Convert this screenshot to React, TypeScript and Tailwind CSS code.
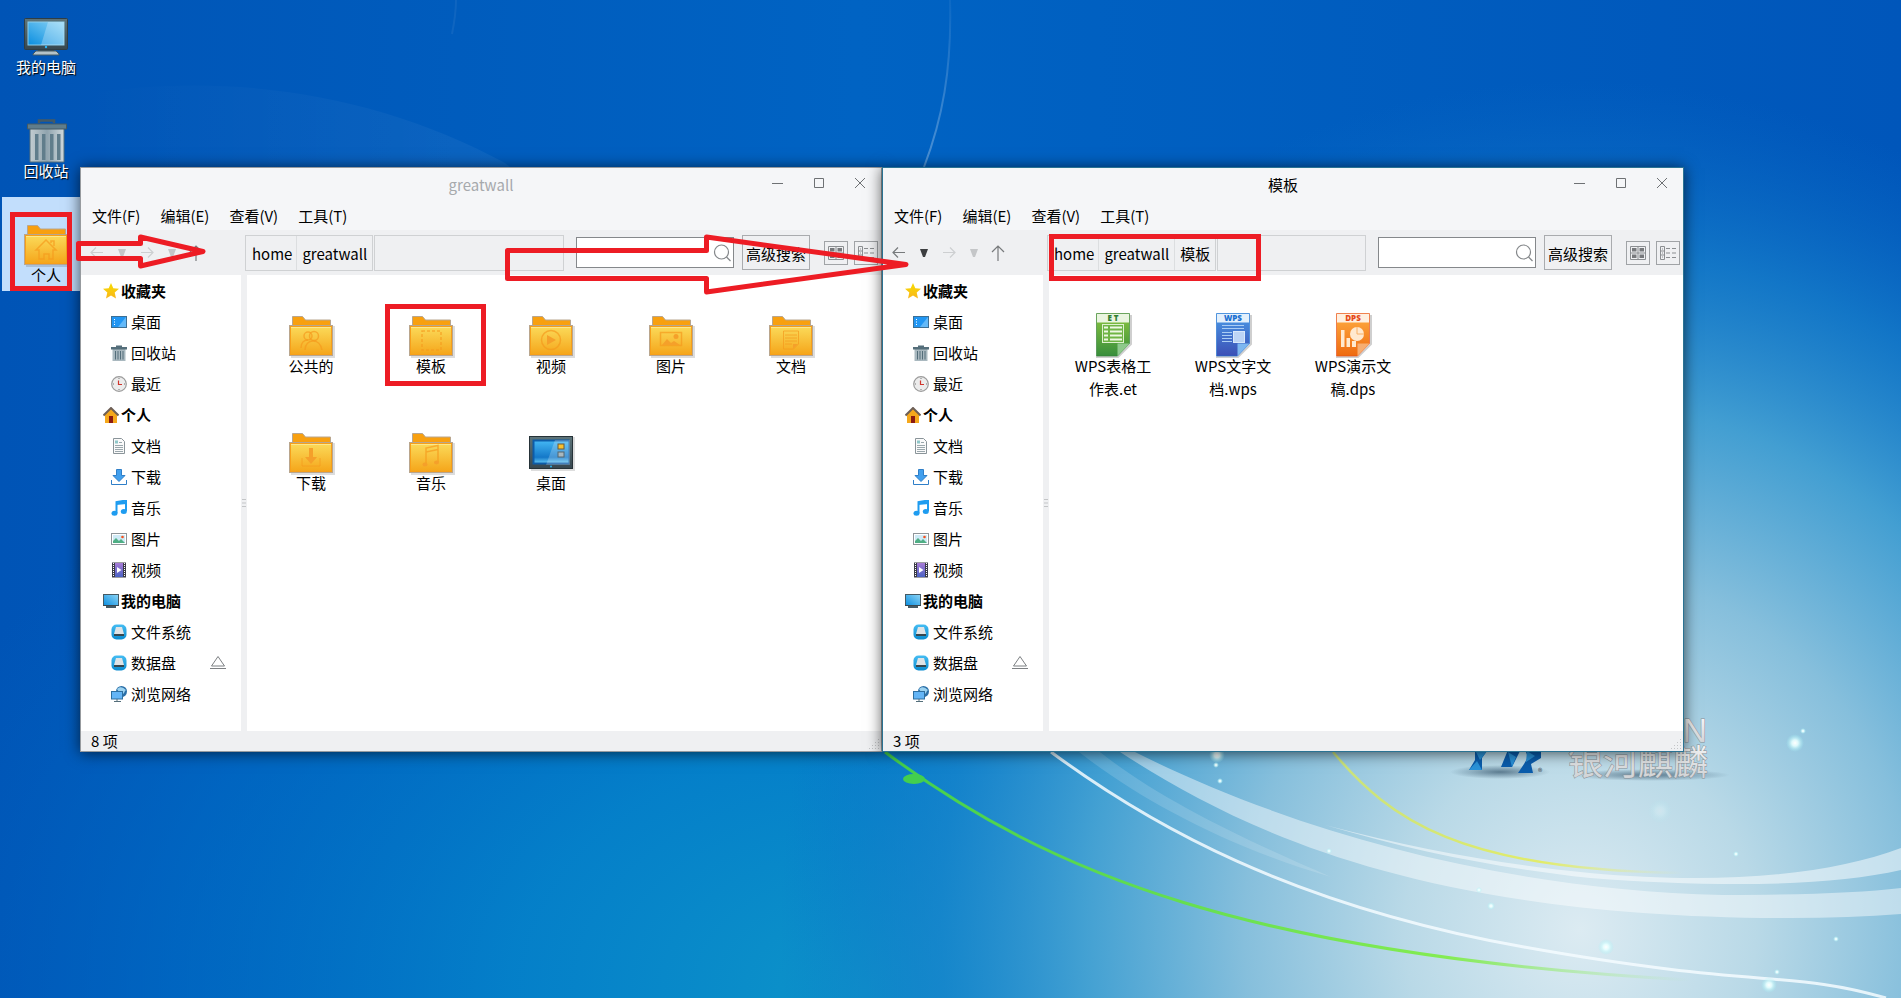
import type { ReactNode } from "react";

interface Place {
  label: string;
  icon: ReactNode;
  heading?: boolean;
  ejectable?: boolean;
}

interface FileEntry {
  name: string;
  icon: ReactNode;
}

interface FileWindowProps {
  title: string;
  active: boolean;
  path: string[];
  canGoBack: boolean;
  files: FileEntry[];
}

/* Shared gradients */
function Gradients() {
  return (
    <svg className="absolute h-0 w-0" aria-hidden="true">
      <defs>
        <linearGradient id="folder" x1="0" y1="0" x2="0" y2="1">
          <stop offset="0" stopColor="#fbdc5c" />
          <stop offset="1" stopColor="#f5a418" />
        </linearGradient>
        <linearGradient id="screen" x1="0" y1="1" x2="1" y2="0">
          <stop offset="0" stopColor="#0a8ee0" />
          <stop offset="1" stopColor="#8fd6f6" />
        </linearGradient>
        <linearGradient id="desk" x1="0" y1="0" x2="0" y2="1">
          <stop offset="0" stopColor="#41b4f2" />
          <stop offset="0.75" stopColor="#1478c8" />
          <stop offset="1" stopColor="#5cc0f0" />
        </linearGradient>
        <linearGradient id="frame" x1="0" y1="0" x2="0" y2="1">
          <stop offset="0" stopColor="#5d7479" />
          <stop offset="1" stopColor="#37474f" />
        </linearGradient>
        <linearGradient id="bin" x1="0" y1="0" x2="1" y2="0">
          <stop offset="0" stopColor="#c3cdd1" />
          <stop offset="0.5" stopColor="#90a4ae" />
          <stop offset="1" stopColor="#cfd8dc" />
        </linearGradient>
        <linearGradient id="star" x1="0" y1="0" x2="0" y2="1">
          <stop offset="0" stopColor="#f7dc00" />
          <stop offset="1" stopColor="#f9b61c" />
        </linearGradient>
        <linearGradient id="drive" x1="0" y1="0" x2="0" y2="1">
          <stop offset="0" stopColor="#45bdf3" />
          <stop offset="1" stopColor="#0a8bd0" />
        </linearGradient>
        <linearGradient id="film" x1="0" y1="0" x2="0" y2="1">
          <stop offset="0" stopColor="#a87bd6" />
          <stop offset="1" stopColor="#4a62c4" />
        </linearGradient>
        <linearGradient id="et" x1="0" y1="0" x2="0" y2="1">
          <stop offset="0" stopColor="#8cc63f" />
          <stop offset="1" stopColor="#388e3c" />
        </linearGradient>
        <linearGradient id="wps" x1="0" y1="0" x2="0" y2="1">
          <stop offset="0" stopColor="#4a9be8" />
          <stop offset="1" stopColor="#3c4fb5" />
        </linearGradient>
        <linearGradient id="dps" x1="0" y1="0" x2="0" y2="1">
          <stop offset="0" stopColor="#ffae42" />
          <stop offset="1" stopColor="#ee6a10" />
        </linearGradient>
        <linearGradient id="chrome" x1="0" y1="0" x2="0" y2="1">
          <stop offset="0" stopColor="#ffffff" />
          <stop offset="1" stopColor="#c9cccf" />
        </linearGradient>
      </defs>
    </svg>
  );
}

/* 48px icons */
function FolderIcon({ children }: { children: ReactNode }) {
  return (
    <svg viewBox="0 0 48 48" className="h-12 w-12 shrink-0" aria-hidden="true">
      <path d="M4 47h43V16" fill="none" stroke="#00000022" strokeWidth="2" />
      <path d="M5.500 16V6.500h10l3 3.500H43.500v6z" fill="#f8a010" stroke="#b9a68e" />
      <rect x="2.500" y="15.500" width="43" height="30" fill="url(#folder)" stroke="#b9a68e" />
      <rect x="3.500" y="16.500" width="41" height="28" fill="none" stroke="#f7a01a" />
      <path d="M4 17.500h40" stroke="#fde98a" />
      <g fill="none" stroke="#f59a1c" strokeOpacity="0.700" strokeWidth="1.500">
        {children}
      </g>
    </svg>
  );
}

function ComputerIcon() {
  return (
    <svg viewBox="0 0 48 48" className="h-12 w-12 shrink-0" aria-hidden="true">
      <path d="M16 38h16v4H16z" fill="#37474f" />
      <path d="M11 43l3-3h20l3 3v1H11z" fill="#b4c2c8" stroke="#455a64" />
      <rect x="2.500" y="7.500" width="43" height="31" rx="1" fill="url(#frame)" stroke="#2f3d44" />
      <rect x="6" y="11" width="36" height="23" fill="url(#screen)" stroke="#8ccdec" />
      <path d="M26 11h16v23H19z" fill="#fff" opacity="0.250" />
      <circle cx="24" cy="36" r="1.200" fill="#29b6f6" />
    </svg>
  );
}

function BinIcon() {
  return (
    <svg viewBox="0 0 48 48" className="h-12 w-12 shrink-0" aria-hidden="true">
      <path d="M17 8V5.500h15V8" fill="none" stroke="#455a64" strokeWidth="2.500" />
      <path d="M8 13h34v34H8z" fill="url(#bin)" stroke="#546e7a" />
      <path d="M5.500 9h39v5h-39z" fill="#607d8b" stroke="#455a64" />
      <path d="M13 19h3.500v26H13zM20 19h3.500v26H20zM28 19h3.500v26H28zM35 19h3.500v26H35z" fill="#607d8b" />
    </svg>
  );
}

function DesktopIcon() {
  return (
    <svg viewBox="0 0 48 48" className="h-12 w-12 shrink-0" aria-hidden="true">
      <path d="M4 43h43V10" fill="none" stroke="#00000022" strokeWidth="2" />
      <rect x="2.500" y="9.500" width="43" height="32" fill="url(#frame)" stroke="#263238" />
      <rect x="5.500" y="12.500" width="37" height="25" fill="#0d5ca8" />
      <rect x="7.500" y="14.500" width="34" height="21" fill="url(#desk)" />
      <path d="M28 13h15v25H19z" fill="#fff" opacity="0.220" />
      <rect x="31" y="17" width="6" height="5" fill="#fbc02d" stroke="#6b5b3a" />
      <rect x="31" y="25" width="6" height="5" fill="#a9b8bf" stroke="#54666e" />
      <circle cx="24" cy="39.500" r="1" fill="#29b6f6" />
    </svg>
  );
}

interface DocIconProps {
  badge: string;
  fill: string;
  headFill: string;
  badgeColor: string;
  foldFill: string;
  children: ReactNode;
}

function DocIcon({ badge, fill, headFill, badgeColor, foldFill, children }: DocIconProps) {
  return (
    <svg viewBox="0 0 48 48" className="h-12 w-12 shrink-0" aria-hidden="true">
      <path d="M7 47h22l13-13V5" fill="none" stroke="#00000030" strokeWidth="2" />
      <path d="M7.500 3.500h33v30l-12 12.500h-21z" fill={fill} stroke={badgeColor} strokeOpacity="0.600" />
      <path d="M8 4h32v8.500H8z" fill={headFill} />
      {children}
      <path d="M40.500 33.500h-12V46z" fill={foldFill} />
      <text x="24" y="11" textAnchor="middle" fontSize="8" fontWeight="800" fill={badgeColor} fontFamily="Open Sans, sans-serif">
        {badge}
      </text>
    </svg>
  );
}

const homeFolder = (
  <FolderIcon>
    <path d="M14 31l10-10 10 10h-3v9h-4v-5h-5v5h-5v-9zM29 24v-2h3v5" />
  </FolderIcon>
);

const homeFiles: FileEntry[] = [
  {
    name: "公共的",
    icon: (
      <FolderIcon>
        <circle cx="21" cy="26" r="4" />
        <circle cx="27" cy="26" r="4.500" />
        <path d="M14 38c0-5 3-8 7-8M18 40c0-6 4-9 8-9s8 3 9 9" />
      </FolderIcon>
    ),
  },
  {
    name: "模板",
    icon: (
      <FolderIcon>
        <rect x="15" y="21" width="19" height="19" strokeDasharray="3 2" />
      </FolderIcon>
    ),
  },
  {
    name: "视频",
    icon: (
      <FolderIcon>
        <circle cx="24" cy="30" r="9.500" />
        <path d="M20 25v10l9-5z" fill="#f5a02a" stroke="none" />
      </FolderIcon>
    ),
  },
  {
    name: "图片",
    icon: (
      <FolderIcon>
        <rect x="13.500" y="22.500" width="21" height="13" />
        <path d="M15 35l5-6 4 4 3-2 6 4z" fill="#f5a02a" stroke="none" />
        <circle cx="29" cy="26.500" r="2.500" fill="#f5a02a" stroke="none" />
      </FolderIcon>
    ),
  },
  {
    name: "文档",
    icon: (
      <FolderIcon>
        <path d="M31.500 34v-13h-15v18h10zM18 25h12M18 28h12M18 31h12M18 34h7" strokeWidth="1" />
        <path d="M31 34h-5v5z" fill="#f5a02a" stroke="none" />
      </FolderIcon>
    ),
  },
  {
    name: "下载",
    icon: (
      <FolderIcon>
        <path d="M15 31v8h18v-8" strokeWidth="1" />
        <path d="M22 21h4v9h4l-6 7-6-7h4z" fill="#f5a02a" stroke="none" />
      </FolderIcon>
    ),
  },
  {
    name: "音乐",
    icon: (
      <FolderIcon>
        <path d="M19 37V21l12-2.500V35M19 25l12-2.500" />
        <ellipse cx="18" cy="37.500" rx="2.500" ry="2" fill="#f5a02a" stroke="none" />
        <ellipse cx="29.500" cy="35.500" rx="2.500" ry="2" fill="#f5a02a" stroke="none" />
      </FolderIcon>
    ),
  },
  { name: "桌面", icon: <DesktopIcon /> },
];

const templateFiles: FileEntry[] = [
  {
    name: "WPS表格工作表.et",
    icon: (
      <DocIcon badge="E T" fill="url(#et)" headFill="#eaf5e0" badgeColor="#2e7d32" foldFill="#8fc98c">
        <rect x="13.500" y="14.500" width="21" height="18" fill="#6fb545" stroke="#dff0d0" />
        <path d="M15 17.500h4M15 21.500h4M15 25.500h4M15 29.500h4M21 17.500h12M21 21.500h12M21 25.500h12M21 29.500h12" stroke="#eef8e4" strokeWidth="2" />
      </DocIcon>
    ),
  },
  {
    name: "WPS文字文档.wps",
    icon: (
      <DocIcon badge="WPS" fill="url(#wps)" headFill="#e3f0fc" badgeColor="#1a6fd0" foldFill="#7db7f0">
        <path d="M13 15.500h22M13 18.500h22M13 22.500h10M13 25.500h10M13 28.500h10M13 31.500h10" stroke="#a9ccf4" />
        <rect x="24.500" y="21.500" width="11" height="11" fill="#bcd4f5" stroke="#d8e8fb" />
      </DocIcon>
    ),
  },
  {
    name: "WPS演示文稿.dps",
    icon: (
      <DocIcon badge="DPS" fill="url(#dps)" headFill="#fff0e0" badgeColor="#e64a19" foldFill="#f7ae72">
        <path d="M12 20h3.500v17H12zM17.500 28H21v9h-3.500zM23 31h4v6h-4z" fill="#ffe9cf" />
        <circle cx="28" cy="24" r="7" fill="#ffe9cf" />
        <path d="M28 17v7h7" fill="none" stroke="#f9b066" />
      </DocIcon>
    ),
  },
];

/* 16px sidebar icons */
function SmallIcon({ children }: { children: ReactNode }) {
  return (
    <svg viewBox="0 0 16 16" className="h-4 w-4 shrink-0" aria-hidden="true">
      {children}
    </svg>
  );
}

const driveIcon = (
  <SmallIcon>
    <rect x="0.500" y="0.500" width="15" height="15" rx="5" fill="url(#drive)" />
    <path d="M5 3h6l2 7H3z" fill="#dfe3e6" />
    <path d="M3 10h10v2H3z" fill="#37474f" />
  </SmallIcon>
);

const places: Place[] = [
  {
    label: "收藏夹",
    heading: true,
    icon: (
      <SmallIcon>
        <path d="M8 0l2.300 5.300 5.700.5-4.300 3.800 1.300 5.900-5-3.100-5 3.100 1.300-5.900L0 5.800l5.700-.5z" fill="url(#star)" />
      </SmallIcon>
    ),
  },
  {
    label: "桌面",
    icon: (
      <SmallIcon>
        <rect x="0.500" y="2.500" width="15" height="11" fill="#2196f3" stroke="#3d6f94" />
        <path d="M7 13L15 3v10z" fill="#64b9f8" />
        <path d="M3.500 5v6" stroke="#fff" strokeDasharray="1 1.500" />
      </SmallIcon>
    ),
  },
  {
    label: "回收站",
    icon: (
      <SmallIcon>
        <path d="M1.500 4h13v12h-13z" fill="#a9b8bf" />
        <path d="M5 0.500h6V2h5v2.500H0V2h5z" fill="#546e7a" />
        <path d="M4.500 6v8.500M7 6v8.500M9.500 6v8.500M12 6v8.500" stroke="#546e7a" />
      </SmallIcon>
    ),
  },
  {
    label: "最近",
    icon: (
      <SmallIcon>
        <circle cx="8" cy="8" r="7.300" fill="#ececec" stroke="#9b9b9b" strokeWidth="1.200" />
        <path d="M8 2v1M8 13v1M2 8h1M13 8h1" stroke="#777" />
        <path d="M7.500 4.500v4H11" fill="none" stroke="#d0342c" strokeWidth="1.200" />
      </SmallIcon>
    ),
  },
  {
    label: "个人",
    heading: true,
    icon: (
      <SmallIcon>
        <path d="M2 7l6-6 6 6v9H2z" fill="#f5a81c" />
        <path d="M6 9h4v7H6z" fill="#8b1a10" />
        <path d="M0.500 8.500L8 1l7.500 7.500" fill="none" stroke="#6d5f57" strokeWidth="2" />
      </SmallIcon>
    ),
  },
  {
    label: "文档",
    icon: (
      <SmallIcon>
        <path d="M2.500 0.500h8l3 3v12h-11z" fill="#fafafa" stroke="#8a9499" />
        <path d="M4 2.500h3v3H4z" fill="#8fc7c9" />
        <path d="M8 4.500h3M4 7.500h8M4 9.500h8M4 11.500h8M4 13.500h8" stroke="#9aa7ac" />
      </SmallIcon>
    ),
  },
  {
    label: "下载",
    icon: (
      <SmallIcon>
        <path d="M5.500 0.500h5v6H14l-6 6-6-6h3.500z" fill="#42a0ee" stroke="#2f7fc8" />
        <path d="M0.500 11v4.500h15V11" fill="none" stroke="#2f7fc8" />
      </SmallIcon>
    ),
  },
  {
    label: "音乐",
    icon: (
      <SmallIcon>
        <path d="M5.500 13V2L15 0.500V11" fill="none" stroke="#1e9cf0" strokeWidth="2" />
        <path d="M5 2.500L15.500 1v3L5 5z" fill="#1e9cf0" />
        <ellipse cx="3.500" cy="13.300" rx="3" ry="2.500" fill="#1e9cf0" />
        <ellipse cx="12.800" cy="11.500" rx="3" ry="2.500" fill="#1e9cf0" />
      </SmallIcon>
    ),
  },
  {
    label: "图片",
    icon: (
      <SmallIcon>
        <rect x="0.500" y="2.500" width="15" height="11" fill="#fff" stroke="#8f9599" />
        <path d="M2 4h12v8H2z" fill="#cfeaf6" />
        <path d="M2 12V10l3-3 3 3 2-2 4 4z" fill="#4fae85" />
        <circle cx="11.500" cy="6" r="1.300" fill="#f4511e" />
      </SmallIcon>
    ),
  },
  {
    label: "视频",
    icon: (
      <SmallIcon>
        <path d="M1 0.500h14v15H1z" fill="#3b3b46" />
        <path d="M2.500 1v14M13.500 1v14" stroke="#fff" strokeDasharray="1 1" />
        <path d="M4 1h8v14H4z" fill="url(#film)" />
        <path d="M6 5v6l4.500-3z" fill="#fff" />
      </SmallIcon>
    ),
  },
  {
    label: "我的电脑",
    heading: true,
    icon: (
      <SmallIcon>
        <path d="M3 13h10v2H3z" fill="#455a64" />
        <rect x="0.500" y="1.500" width="15" height="11" fill="url(#screen)" stroke="#455a64" />
        <path d="M0 12.500h16" stroke="#37474f" />
      </SmallIcon>
    ),
  },
  { label: "文件系统", icon: driveIcon },
  { label: "数据盘", icon: driveIcon, ejectable: true },
  {
    label: "浏览网络",
    icon: (
      <SmallIcon>
        <circle cx="10.500" cy="5.500" r="5.500" fill="#2a6fa8" />
        <path d="M6 3c3-3 6-2 9 1-2 1-1 3-3 4s-4-2-6-5z" fill="#9cd2f0" />
        <rect x="0.500" y="5.500" width="11" height="7.500" fill="#64b5f6" stroke="#2f6f9f" />
        <path d="M6 13v2.500M3 15.500h7" stroke="#546e7a" />
      </SmallIcon>
    ),
  },
];

const menus = ["文件(F)", "编辑(E)", "查看(V)", "工具(T)"];

function TitleBar({ title, active }: { title: string; active: boolean }) {
  return (
    <header className="grid h-8 grid-cols-[1fr_auto_1fr] items-center bg-[#f5f6f8]">
      <h2 className={`col-start-2 ${active ? "text-black" : "text-[#a6a9ac]"}`}>{title}</h2>
      <div className="flex items-center justify-end gap-[29px] pr-[15px] pb-[3px]">
        <button aria-label="最小化">
          <svg className="h-3 w-3" viewBox="0 0 12 12" stroke="#6e7174">
            <path d="M0 6.500h11" />
          </svg>
        </button>
        <button aria-label="最大化">
          <svg className="h-3 w-3" viewBox="0 0 12 12" fill="none" stroke="#6e7174">
            <path d="M1.500 1.500h9v9h-9z" />
          </svg>
        </button>
        <button aria-label="关闭">
          <svg className="h-3 w-3" viewBox="0 0 12 12" stroke="#6e7174">
            <path d="M1 1l10 10M11 1L1 11" />
          </svg>
        </button>
      </div>
    </header>
  );
}

function NavButtons({ canGoBack }: { canGoBack: boolean }) {
  return (
    <div className="flex w-[164px] shrink-0 items-center gap-[11px] pl-2">
      <button aria-label="后退" disabled={!canGoBack} className={canGoBack ? "text-[#777a7c]" : "text-[#cdcfd1]"}>
        <svg className="h-4 w-4" viewBox="0 0 16 16" fill="none" stroke="currentColor" strokeWidth="1.200">
          <path d="M14 7.500H2M7 2.500l-5 5 5 5" />
        </svg>
      </button>
      <button aria-label="后退历史" disabled={!canGoBack} className={canGoBack ? "text-[#3c3e40]" : "text-[#c4c6c8]"}>
        <svg className="h-4 w-3" viewBox="0 0 12 16" fill="currentColor">
          <path d="M2 4h8l-3 8H5z" />
        </svg>
      </button>
      <button aria-label="前进" disabled className="text-[#cdcfd1]">
        <svg className="h-4 w-4" viewBox="0 0 16 16" fill="none" stroke="currentColor" strokeWidth="1.200">
          <path d="M2 7.500h12M9 2.500l5 5-5 5" />
        </svg>
      </button>
      <button aria-label="前进历史" disabled className="text-[#c4c6c8]">
        <svg className="h-4 w-3" viewBox="0 0 12 16" fill="currentColor">
          <path d="M2 4h8l-3 8H5z" />
        </svg>
      </button>
      <button aria-label="上一级" className="text-[#777a7c]">
        <svg className="h-4 w-3.5" viewBox="0 0 14 16" fill="none" stroke="currentColor" strokeWidth="1.200">
          <path d="M7 16V1M1 7l6-6 6 6" />
        </svg>
      </button>
    </div>
  );
}

function Toolbar({ path, canGoBack }: { path: string[]; canGoBack: boolean }) {
  return (
    <div className="flex h-[45px] items-center bg-[#eff0f2]">
      <NavButtons canGoBack={canGoBack} />
      {/* Path bar */}
      <div className="flex h-9 min-w-0 flex-1 gap-px">
        <nav className="flex items-center border border-[#cfd1d3]">
          {path.map((part, i) => (
            <a
              key={part}
              href="#"
              className={`flex h-full items-center pt-0.5 ${i ? "border-l border-[#dcdee0] px-[5px]" : "pr-1 pl-1.5"}`}
            >
              {part}
            </a>
          ))}
        </nav>
        <div className="flex-1 border border-[#cfd1d3]"></div>
      </div>
      <label className="ml-3 flex h-[31px] w-[158px] items-center border border-[#85888b] bg-white pr-0.5">
        <input type="text" aria-label="搜索" className="min-w-0 flex-1 bg-transparent px-1 outline-none" />
        <svg className="h-[18px] w-[18px]" viewBox="0 0 18 18" fill="none" stroke="#85888b" strokeWidth="1.200">
          <circle cx="8.500" cy="8" r="7" />
          <path d="M13.500 13l4 4" />
        </svg>
      </label>
      <button className="ml-2 h-[35px] w-[68px] border border-[#a9abae] pt-0.5 whitespace-nowrap">高级搜索</button>
      <button aria-label="图标视图" className="ml-3.5 grid h-6 w-6 place-items-center border border-[#a0a3a6]">
        <svg className="h-4 w-4" viewBox="0 0 16 16" fill="none" stroke="#8b8e91">
          <path d="M0.500 1.500h15v13H0.500zM8 2v12M1 8h14" />
          <path d="M2 3h4.500v3.500H2zM9.500 3H14v3.500H9.500zM2 9.500h4.500V13H2zM9.500 9.500H14V13H9.500z" fill="#77797c" stroke="none" />
        </svg>
      </button>
      <button aria-label="列表视图" className="mr-[3px] ml-1.5 grid h-6 w-6 place-items-center border border-[#a0a3a6]">
        <svg className="h-4 w-4" viewBox="0 0 16 16" fill="none" stroke="#8b8e91">
          <path d="M0.500 1.500h4v13h-4zM1 6h3M1 10h3M2 4h1M2 8h1M2 12h1" />
          <path d="M6 3.500h4M12 3.500h4M6 8h4M12 8h4M6 12.500h4M12 12.500h4" />
        </svg>
      </button>
    </div>
  );
}

function Sidebar() {
  return (
    <ul className="w-40 shrink-0 bg-white">
      {places.map((place, i) => (
        <li key={i} className="flex h-[31px] items-center">
          <a
            href="#"
            className={`flex flex-1 items-center ${place.heading ? "gap-0.5 pl-[22px] font-bold" : "gap-1 pl-[30px]"}`}
          >
            {place.icon}
            {place.label}
          </a>
          {place.ejectable && (
            <button aria-label="弹出" className="mr-[15px]">
              <svg className="h-4 w-4" viewBox="0 0 16 16" fill="none" stroke="#7d8083">
                <path d="M8 1.500l6.500 9.500h-13zM0 13.500h16" />
              </svg>
            </button>
          )}
        </li>
      ))}
    </ul>
  );
}

function FileWindow({ title, active, path, canGoBack, files }: FileWindowProps) {
  return (
    <section
      className={`flex w-[802px] shrink-0 flex-col border bg-[#eff0f2] text-black shadow-[0_1px_14px_rgba(0,0,0,0.65)] ${
        active ? "border-[#2a7393]" : "border-[#979b9f]"
      }`}
    >
      <TitleBar title={title} active={active} />
      <nav className="flex h-[30px] items-center gap-5 bg-[#f5f6f8] pl-[11px]">
        {menus.map((menu) => (
          <button key={menu}>{menu}</button>
        ))}
      </nav>
      <Toolbar path={path} canGoBack={canGoBack} />
      <div className="flex min-h-[456px]">
        <Sidebar />
        {/* Splitter */}
        <div className="grid w-1.5 place-items-center">
          <svg className="h-2 w-1" viewBox="0 0 4 8" stroke="#c3c5c7">
            <path d="M0 0.500h4M0 4h4M0 7.500h4" />
          </svg>
        </div>
        <ul className="flex flex-1 flex-wrap content-start gap-y-[46px] bg-white pt-[35px] pl-1">
          {files.map((file) => (
            <li key={file.name} className="flex h-[71px] w-[120px] flex-col items-center">
              {file.icon}
              <span className="-mt-1 w-20 text-center break-all">{file.name}</span>
            </li>
          ))}
        </ul>
      </div>
      <footer className="flex h-5 items-center justify-between pl-2.5 leading-5">
        <span>{files.length} 项</span>
        <svg className="h-3 w-3 self-end" viewBox="0 0 12 12" fill="#c3c5c7">
          <path d="M9 0h1v1H9zM9 3h1v1H9zM6 3h1v1H6zM9 6h1v1H9zM6 6h1v1H6zM3 6h1v1H3zM9 9h1v1H9zM6 9h1v1H6zM3 9h1v1H3zM0 9h1v1H0z" />
        </svg>
      </footer>
    </section>
  );
}

function Wallpaper() {
  const sparks = [
    [1795, 743, 9],
    [1803, 731, 3],
    [1606, 947, 8],
    [1769, 985, 8],
    [1777, 972, 3],
    [1217, 755, 8],
    [1216, 765, 3],
    [1220, 781, 3],
    [1329, 851, 3],
    [1479, 890, 3],
    [1491, 906, 4],
    [1736, 854, 3],
    [1836, 939, 3],
  ];

  return (
    <svg
      className="absolute inset-0 h-full w-full"
      viewBox="0 0 1901 998"
      preserveAspectRatio="xMaxYMax slice"
      aria-hidden="true"
    >
      <defs>
        <linearGradient id="sky" x1="0" y1="0" x2="1" y2="0">
          <stop offset="0" stopColor="#0054b6" />
          <stop offset="0.450" stopColor="#0063c3" />
          <stop offset="1" stopColor="#0056ba" />
        </linearGradient>
        <radialGradient id="glow" gradientUnits="userSpaceOnUse" cx="0" cy="0" r="1" gradientTransform="translate(1580 930) scale(800 850)">
          <stop offset="0" stopColor="#dcebf2" />
          <stop offset="0.220" stopColor="#b9d9e7" />
          <stop offset="0.420" stopColor="#86bfdc" />
          <stop offset="0.620" stopColor="#46a2d3" stopOpacity="0.950" />
          <stop offset="0.800" stopColor="#1a83cc" stopOpacity="0.700" />
          <stop offset="1" stopColor="#0a6cc6" stopOpacity="0" />
        </radialGradient>
        <radialGradient id="teal" gradientUnits="userSpaceOnUse" cx="0" cy="0" r="1" gradientTransform="translate(860 990) scale(1000 700)">
          <stop offset="0" stopColor="#0d94c9" />
          <stop offset="0.350" stopColor="#0583ca" stopOpacity="0.900" />
          <stop offset="0.700" stopColor="#006fc6" stopOpacity="0.550" />
          <stop offset="1" stopColor="#0064c0" stopOpacity="0" />
        </radialGradient>
        <radialGradient id="spark">
          <stop offset="0" stopColor="#fff" />
          <stop offset="0.350" stopColor="#e6ffff" stopOpacity="0.900" />
          <stop offset="1" stopColor="#9ef0f5" stopOpacity="0" />
        </radialGradient>
        <radialGradient id="soft">
          <stop offset="0" stopColor="#10304a" stopOpacity="0.550" />
          <stop offset="1" stopColor="#10304a" stopOpacity="0" />
        </radialGradient>
        <linearGradient id="green" x1="0" y1="0" x2="1" y2="0">
          <stop offset="0" stopColor="#43cf4e" />
          <stop offset="0.700" stopColor="#84ec52" />
          <stop offset="1" stopColor="#a8ec90" stopOpacity="0" />
        </linearGradient>
        <linearGradient id="yellow" x1="0" y1="0" x2="1" y2="0">
          <stop offset="0" stopColor="#c9e27c" />
          <stop offset="0.600" stopColor="#e2ec6a" />
          <stop offset="1" stopColor="#e2ec9a" stopOpacity="0" />
        </linearGradient>
        <linearGradient id="arc" x1="0" y1="0" x2="1" y2="0">
          <stop offset="0" stopColor="#fff" stopOpacity="0" />
          <stop offset="1" stopColor="#fff" stopOpacity="0.060" />
        </linearGradient>
        <linearGradient id="streak" gradientUnits="userSpaceOnUse" x1="0" y1="0" x2="0" y2="167">
          <stop offset="0" stopColor="#fff" stopOpacity="0.050" />
          <stop offset="1" stopColor="#fff" stopOpacity="0.300" />
        </linearGradient>
      </defs>

      <rect width="1901" height="998" fill="url(#sky)" />
      <rect width="1901" height="998" fill="url(#teal)" />
      <rect width="1901" height="998" fill="url(#glow)" />

      {/* Light arcs */}
      <path d="M80 95C230 70 380 95 505 163L600 240H80z" fill="url(#arc)" />
      <path d="M950 0c2 70-8 120-26 167" fill="none" stroke="url(#streak)" strokeWidth="2" />
      <path d="M456 0c0 14-2 24-4 34" fill="none" stroke="#fff" strokeOpacity="0.060" strokeWidth="2" />

      {/* Ribbons */}
      <path d="M1120 752C1240 830 1420 918 1790 918Q1850 918 1901 914V888Q1840 895 1723 895C1500 890 1290 830 1135 752z" fill="#fff" opacity="0.450" />
      <path d="M1079 752C1140 800 1230 848 1331 877C1250 842 1160 800 1100 752z" fill="#fff" opacity="0.150" />
      <path d="M1325 825C1420 850 1500 864 1590 873C1720 885 1830 875 1901 848V870C1830 886 1720 888 1590 878C1500 868 1420 853 1325 825z" fill="#fff" opacity="0.500" />
      <path d="M885 752C1050 875 1250 955 1690 980" fill="none" stroke="url(#green)" strokeWidth="3" />
      <path d="M1051 752C1150 825 1290 905 1524 947S1790 970 1886 998" fill="none" stroke="#f4fbff" strokeOpacity="0.850" strokeWidth="3" />
      <path d="M1333 752C1390 820 1460 870 1683 873" fill="none" stroke="url(#yellow)" strokeWidth="2.500" />
      <ellipse cx="914" cy="779" rx="11" ry="5" fill="#43cf4e" />

      {sparks.map(([x, y, r]) => (
        <circle key={`${x}-${y}`} cx={x} cy={y} r={r} fill="url(#spark)" />
      ))}
      <circle cx="1660" cy="811" r="12" fill="url(#spark)" opacity="0.250" />

      {/* Logo */}
      <ellipse cx="1500" cy="772" rx="50" ry="7" fill="url(#soft)" />
      <ellipse cx="1650" cy="775" rx="80" ry="6" fill="url(#soft)" />
      <path d="M1475 745h16l-9 13v12h-13l6-10zM1510 745h13l-11 22h-11zM1523 745h18v13l-10 6 2 9h-15l6-9 4-7z" fill="#0a5cab" />
      <path d="M1475 750l5 10 8-10zM1469 770l8-9 5 9zM1508 752l8 5-4 10zM1527 751l8 5-9 6z" fill="#2a92d8" />
      <text x="1538" y="775" fontSize="9" fill="#37474f">®</text>
      <g fill="url(#chrome)" stroke="#8a8f93" strokeWidth="1" paintOrder="stroke">
        <text x="1707" y="742" textAnchor="end" fontSize="34" fontFamily="Liberation Sans, sans-serif">N</text>
        <text x="1568" y="775" fontSize="35">银河麒麟</text>
      </g>
    </svg>
  );
}

function Annotations() {
  return (
    <svg
      className="pointer-events-none absolute top-0 left-0 h-[400px] w-[1280px]"
      viewBox="0 0 1280 400"
      fill="none"
      stroke="#ed1c24"
      strokeWidth="5"
      aria-hidden="true"
    >
      <rect x="12.500" y="214.500" width="57" height="74" />
      <rect x="387.500" y="306.500" width="96" height="77" />
      <rect x="1051.500" y="236.500" width="207" height="42" />
      <path d="M78.500 243.500H140.500V237L203 251.500L140.500 266V258.500H78.500z" strokeLinejoin="round" />
      <path d="M507.500 250.500H706.500V237L906 264.500L706.500 292V278.500H507.500z" strokeLinejoin="round" />
    </svg>
  );
}

const desktopItems = [
  { name: "我的电脑", icon: <ComputerIcon />, selected: false },
  { name: "回收站", icon: <BinIcon />, selected: false },
  { name: "个人", icon: homeFolder, selected: true },
];

export default function App() {
  return (
    <div className="relative min-h-screen overflow-hidden bg-[#0060c0] font-['Noto_Sans_CJK_SC',sans-serif] text-[15px] leading-[23px]">
      <Gradients />
      <Wallpaper />

      {/* Desktop shortcuts */}
      <ul className="absolute -top-[11px] left-0.5 flex flex-col gap-2.5">
        {desktopItems.map((item) => (
          <li
            key={item.name}
            className={`flex h-[94px] w-[88px] flex-col items-center pt-[22px] ${
              item.selected ? "bg-[#c2defc] text-black" : "text-white [text-shadow:1px_1px_1px_#000]"
            }`}
          >
            {item.icon}
            <span className="-mt-1">{item.name}</span>
          </li>
        ))}
      </ul>

      <main className="relative flex items-start pt-[167px] pl-20">
        <FileWindow title="greatwall" active={false} path={["home", "greatwall"]} canGoBack={false} files={homeFiles} />
        <FileWindow title="模板" active path={["home", "greatwall", "模板"]} canGoBack files={templateFiles} />
      </main>

      <Annotations />
    </div>
  );
}
